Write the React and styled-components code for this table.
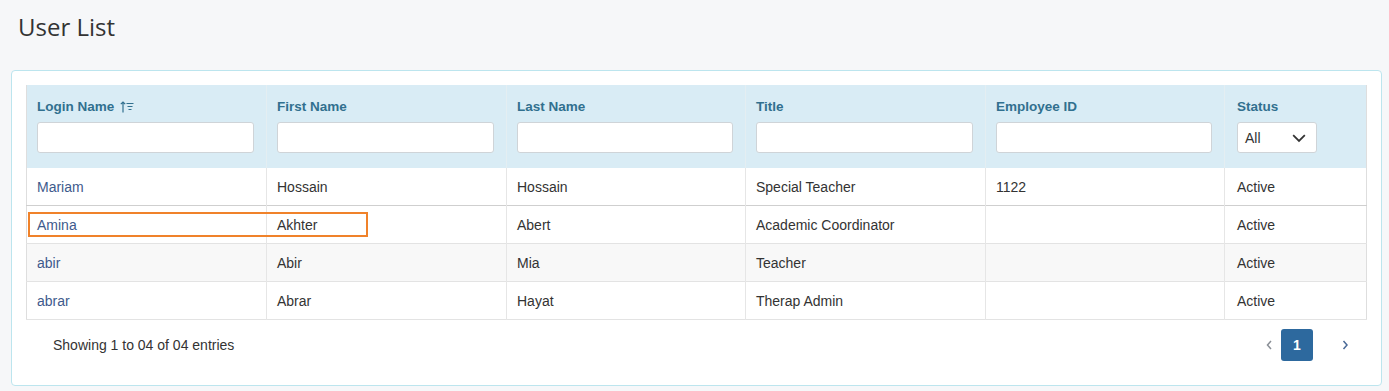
import React from 'react'
import styled, { createGlobalStyle } from 'styled-components'

const GlobalStyle = createGlobalStyle`
body {
  margin: 0;
  background: #f6f7f9;
  font-family: "Liberation Sans", Arial, sans-serif;
  color: #333;
}
`

const Page = styled.div`
padding: 11px 7px 0 11px;
`

const Title = styled.h1`
margin: 0 0 0 7px;
font-family: "Open Sans", "Noto Sans", sans-serif;
font-weight: 400;
font-size: 24px;
line-height: 32px;
color: #333;
`

const Card = styled.div`
margin-top: 27px;
background: #fff;
border: 1px solid #bce5ee;
border-radius: 4px;
padding: 14px 14px 24px;
`

const TableWrap = styled.div`
position: relative;
`

const Table = styled.table`
width: 100%;
table-layout: fixed;
border-collapse: collapse;
border-left: 1px solid #dedede;
border-right: 1px solid #dedede;
`

const HeadCell = styled.th`
background: #d9ecf5;
color: #31708f;
font-size: 13.5px;
font-weight: 700;
text-align: left;
vertical-align: top;
padding: 13px 12px 15px ${p => (p.$last ? 12 : 10)}px;
line-height: 18px;
border-left: 1px solid #e4eef2;
&:first-child { border-left: none; }
`

const HeadLabel = styled.div`
display: flex;
align-items: center;
gap: 6px;
height: 18px;
margin-bottom: 6px;
`

const FilterInput = styled.input`
display: block;
box-sizing: border-box;
width: 100%;
height: 31px;
border: 1px solid #cfd4d8;
border-radius: 3px;
background: #fff;
`

const Select = styled.div`
box-sizing: border-box;
width: 80px;
height: 31px;
border: 1px solid #cfd4d8;
border-radius: 3px;
background: #fff;
display: flex;
align-items: center;
justify-content: space-between;
padding: 0 10px 0 7px;
font-weight: 400;
font-size: 14px;
color: #333;
`

const Row = styled.tr`
background: ${p => (p.$striped ? '#f8f8f8' : '#fff')};
border-top: 1px solid ${p => (p.$strong ? '#cfcfcf' : '#e3e3e3')};
&:first-child { border-top: none; }
&:last-child { border-bottom: 1px solid #e3e3e3; }
`

const Cell = styled.td`
font-size: 14px;
line-height: 18px;
padding: 10px ${p => (p.$last ? 12 : 10)}px 9px;
color: ${p => (p.$link ? '#3e5a8c' : '#333')};
border-left: 1px solid #e6e6e6;
white-space: nowrap;
overflow: hidden;
&:first-child { border-left: none; }
`

const Highlight = styled.div`
position: absolute;
left: 2px;
top: 127px;
width: 340px;
height: 25px;
box-sizing: border-box;
border: 2px solid #f0822a;
pointer-events: none;
`

const Footer = styled.div`
display: flex;
align-items: center;
justify-content: space-between;
margin-top: 9px;
height: 32px;
padding-left: 27px;
font-size: 14px;
color: #333;
`

const Pager = styled.div`
display: flex;
align-items: center;
margin-right: 18px;
`

const PageArrow = styled.span`
display: flex;
justify-content: center;
width: 8px;
margin: 0 ${p => p.$right}px 0 ${p => p.$left}px;
`

const PageButton = styled.span`
width: 32px;
height: 32px;
border-radius: 3px;
background: #2d699e;
color: #fff;
font-weight: 700;
font-size: 14px;
display: flex;
align-items: center;
justify-content: center;
`

const SortIcon = () => (
  <svg width="14" height="12" viewBox="0 0 14 12" fill="none" stroke="#31708f" strokeWidth="1.2">
    <path d="M3 11.5V1M0.8 3.2L3 1l2.2 2.2" />
    <path d="M6.5 2.5h7M7.5 5.5h5M8.5 8.5h3" />
  </svg>
)

const Chevron = ({ dir, color }) => {
  const d = {
    down: 'M1 3.5l5 5 5-5',
    left: 'M5 1L1.5 5 5 9',
    right: 'M1.5 1L5 5 1.5 9',
  }[dir]
  const box = dir === 'down' ? '0 0 12 12' : '0 0 7 10'
  const size = dir === 'down' ? [14, 14] : [7, 10]
  return (
    <svg width={size[0]} height={size[1]} viewBox={box} fill="none" stroke={color} strokeWidth="1.5">
      <path d={d} />
    </svg>
  )
}

const columns = ['Login Name', 'First Name', 'Last Name', 'Title', 'Employee ID']
const widths = [240, 240, 239, 240, 239, 142]

const users = [
  ['Mariam', 'Hossain', 'Hossain', 'Special Teacher', '1122', 'Active'],
  ['Amina', 'Akhter', 'Abert', 'Academic Coordinator', '', 'Active'],
  ['abir', 'Abir', 'Mia', 'Teacher', '', 'Active'],
  ['abrar', 'Abrar', 'Hayat', 'Therap Admin', '', 'Active'],
]

export default function App() {
  return (
    <Page>
      <GlobalStyle />
      <Title>User List</Title>
      <Card>
        <TableWrap>
          <Table>
            <colgroup>
              {widths.map((w, i) => <col key={i} style={{ width: w }} />)}
            </colgroup>
            <thead>
              <tr>
                {columns.map((c, i) => (
                  <HeadCell key={c}>
                    <HeadLabel>
                      {c}
                      {i === 0 && <SortIcon />}
                    </HeadLabel>
                    <FilterInput />
                  </HeadCell>
                ))}
                <HeadCell $last>
                  <HeadLabel>Status</HeadLabel>
                  <Select>
                    All
                    <Chevron dir="down" color="#333" />
                  </Select>
                </HeadCell>
              </tr>
            </thead>
            <tbody>
              {users.map((u, r) => (
                <Row key={u[0]} $striped={r === 2} $strong={r === 1}>
                  {u.map((v, i) => (
                    <Cell key={i} $link={i === 0} $last={i === 5}>{v}</Cell>
                  ))}
                </Row>
              ))}
            </tbody>
          </Table>
          <Highlight />
        </TableWrap>
        <Footer>
          <span>Showing 1 to 04 of 04 entries</span>
          <Pager>
            <PageArrow $left={0} $right={8}><Chevron dir="left" color="#8a8f96" /></PageArrow>
            <PageButton>1</PageButton>
            <PageArrow $left={28} $right={0}><Chevron dir="right" color="#4a6a98" /></PageArrow>
          </Pager>
        </Footer>
      </Card>
    </Page>
  )
}
